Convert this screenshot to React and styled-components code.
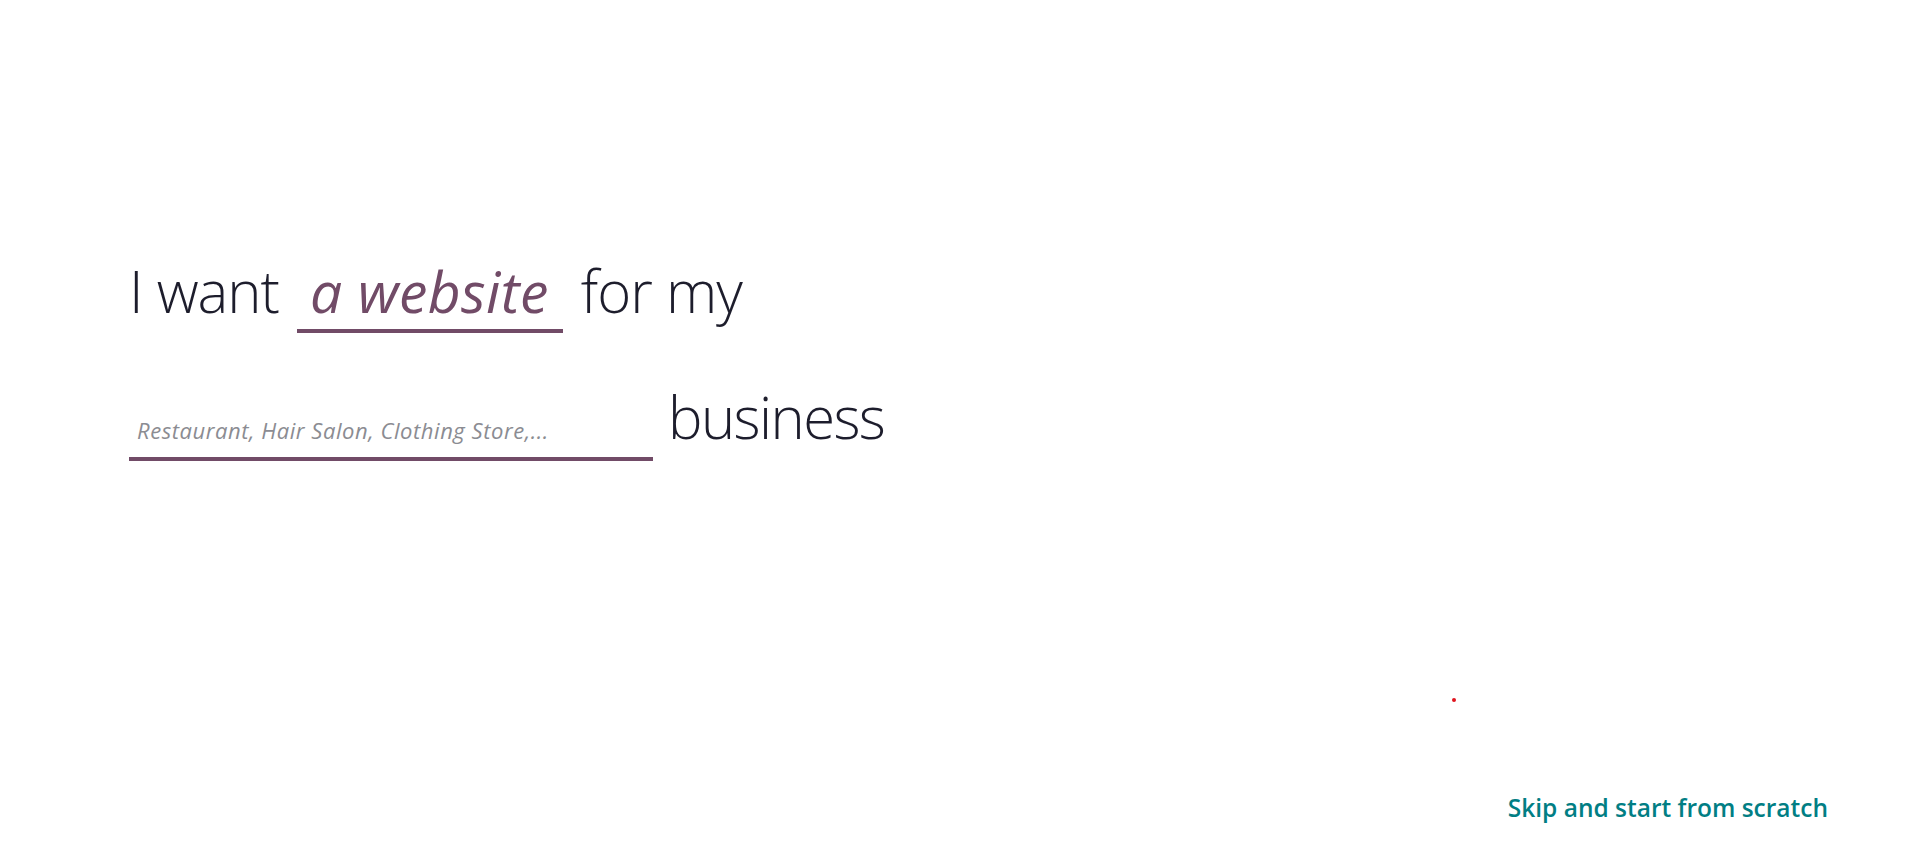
import React from 'react'
import styled, { createGlobalStyle } from 'styled-components'

const GlobalStyle = createGlobalStyle`
  html, body {
    margin: 0;
    padding: 0;
    background: #fff;
  }
  body {
    font-family: 'Open Sans', 'Liberation Sans', sans-serif;
    color: #1f1f2e;
  }
`

const Page = styled.div`
  position: relative;
  height: 850px;
  box-sizing: border-box;
  display: flex;
  flex-direction: column;
  padding: 257px 92px 26px 129px;
`

const Sentence = styled.div`
  display: flex;
  flex-direction: column;
  gap: 50px;
  flex: 1;
`

const Line = styled.div`
  display: flex;
  align-items: baseline;
  gap: ${props => props.gap || 18}px;
`

const Words = styled.span`
  font-size: 58px;
  font-weight: 300;
  line-height: 68px;
  letter-spacing: ${props => props.tight ? -1.6 : -1}px;
  color: #1d1d2c;
  white-space: nowrap;
`

const Picker = styled.div`
  padding: 0 14px 4px 13px;
  border-bottom: 4px solid #714b67;
  font-size: 57px;
  font-style: italic;
  font-weight: 400;
  line-height: 68px;
  letter-spacing: 0.4px;
  color: #714b67;
  white-space: nowrap;
  cursor: pointer;
`

const BusinessInput = styled.input`
  width: 524px;
  box-sizing: border-box;
  padding: 0 8px 13px;
  border: none;
  border-bottom: 4px solid #714b67;
  outline: none;
  background: transparent;
  font-family: 'Open Sans', 'Liberation Sans', sans-serif;
  font-size: 22px;
  font-style: italic;
  line-height: 28px;
  letter-spacing: 0.55px;
  color: #1d1d2c;

  &::placeholder {
    color: #8b8c92;
  }
`

const Footer = styled.div`
  display: flex;
  justify-content: flex-end;
`

const SkipLink = styled.a`
  font-size: 24.5px;
  font-weight: 600;
  color: #017e84;
  text-decoration: none;
  cursor: pointer;
`

const Dot = styled.span`
  position: absolute;
  left: 1452px;
  top: 698px;
  width: 4px;
  height: 4px;
  border-radius: 50%;
  background: #e0141e;
`

export default function App () {
  return (
    <>
      <GlobalStyle />
      <Page>
        <Sentence>
          <Line>
            <Words>I want</Words>
            <Picker>a website</Picker>
            <Words>for my</Words>
          </Line>
          <Line gap={15}>
            <BusinessInput placeholder='Restaurant, Hair Salon, Clothing Store,...' />
            <Words tight>business</Words>
          </Line>
        </Sentence>
        <Footer>
          <SkipLink>Skip and start from scratch</SkipLink>
        </Footer>
        <Dot />
      </Page>
    </>
  )
}
